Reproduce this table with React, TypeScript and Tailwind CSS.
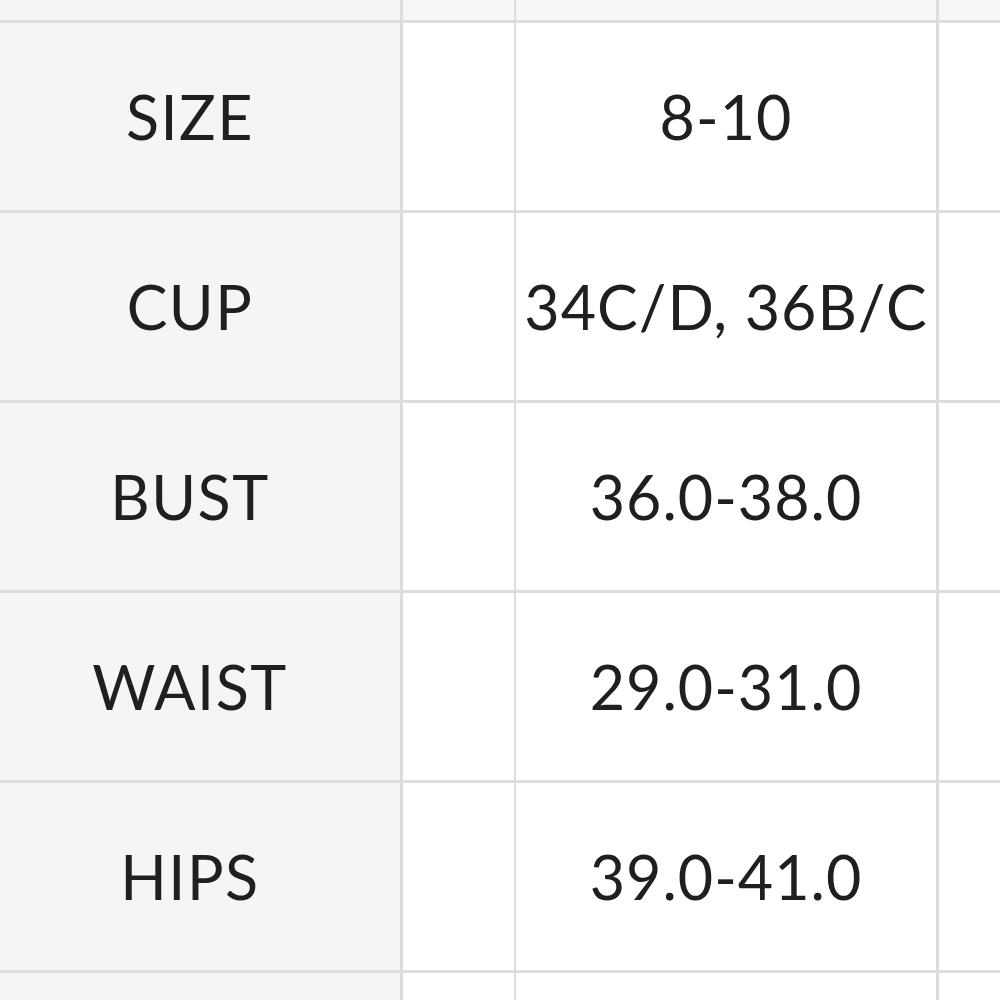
import React from 'react';

const rows = [
  { label: 'SIZE', value: '8-10' },
  { label: 'CUP', value: '34C/D, 36B/C' },
  { label: 'BUST', value: '36.0-38.0' },
  { label: 'WAIST', value: '29.0-31.0' },
  { label: 'HIPS', value: '39.0-41.0' },
];

const App: React.FC = () => {
  return (
    <div className="w-[1000px] h-[1000px] overflow-hidden bg-white text-[#1f1f1f]" style={{ fontFamily: 'Lato, "Open Sans", sans-serif' }}>
      {/* partial top row */}
      <div className="grid grid-cols-[403px_113px_423px_1fr] h-[23px]">
        <div className="bg-[#f6f5f5] border-r-[3px] border-b-[3px] border-[#dddddd]" />
        <div className="bg-[#f7f7f7] border-r-2 border-b-[3px] border-[#dddddd]" />
        <div className="bg-[#f7f7f7] border-r-[3px] border-b-[3px] border-[#dddddd]" />
        <div className="bg-[#f7f7f7] border-b-[3px] border-[#dddddd]" />
      </div>

      {rows.map((row) => (
        <div key={row.label} className="grid grid-cols-[403px_113px_423px_1fr] h-[190px]">
          <div className="bg-[#f6f5f5] border-r-[3px] border-b-[3px] border-[#dddddd] flex items-center justify-center pr-[20px]">
            <span className="text-[61px] leading-none tracking-[1.5px]">{row.label}</span>
          </div>
          <div className="bg-white border-r-2 border-b-[3px] border-[#dddddd]" />
          <div className="bg-white border-r-[3px] border-b-[3px] border-[#dddddd] flex items-center justify-center">
            <span className="text-[61px] leading-none tracking-[1px] whitespace-nowrap">{row.value}</span>
          </div>
          <div className="bg-white border-b-[3px] border-[#dddddd]" />
        </div>
      ))}

      {/* partial bottom row */}
      <div className="grid grid-cols-[403px_113px_423px_1fr] h-[40px]">
        <div className="bg-[#f6f5f5] border-r-[3px] border-[#dddddd]" />
        <div className="bg-white border-r-2 border-[#dddddd]" />
        <div className="bg-white border-r-[3px] border-[#dddddd]" />
        <div className="bg-white" />
      </div>
    </div>
  );
};

export default App;
